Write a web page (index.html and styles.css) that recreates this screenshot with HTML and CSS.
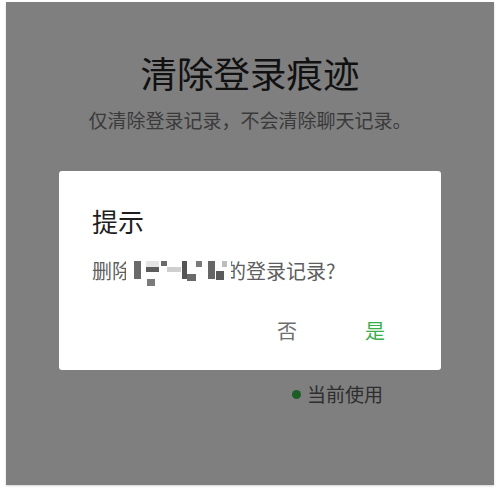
FILE: index.html
```html
<!DOCTYPE html>
<html lang="zh">
<head>
<meta charset="utf-8">
<link rel="stylesheet" href="styles.css">
</head>
<body>
<div class="frame">
  <div class="panel">
    <h1 class="title">清除登录痕迹</h1>
    <p class="subtitle">仅清除登录记录，不会清除聊天记录。</p>
    <div class="dialog">
      <div class="dialog-title">提示</div>
      <div class="dialog-msg">删除<span class="name"></span>的登录记录?<svg class="mosaic" width="105" height="30" viewBox="0 0 105 30">
          <rect x="0" y="0" width="105" height="30" fill="#ffffff"/>
          <rect x="20" y="3" width="13" height="6" fill="#e4e4e4"/>
          <rect x="8" y="3" width="7" height="18" fill="#6a6a6a"/>
          <rect x="20" y="9" width="13" height="5" fill="#5c5c5c"/>
          <rect x="21" y="21" width="8" height="7" fill="#7a7a7a"/>
          <rect x="35" y="3" width="6" height="5" fill="#6a6a6a"/>
          <rect x="41" y="9" width="14" height="5" fill="#cfcfcf"/>
          <rect x="56" y="3" width="5" height="18" fill="#555555"/>
          <rect x="61" y="16" width="9" height="7" fill="#6a6a6a"/>
          <rect x="70" y="3" width="6" height="6" fill="#7a7a7a"/>
          <rect x="82" y="3" width="7" height="18" fill="#666666"/>
          <rect x="90" y="13" width="8" height="9" fill="#5a5a5a"/>
          <rect x="96" y="3" width="5" height="6" fill="#bdbdbd"/>
        </svg></div>
      <div class="dialog-actions">
        <span class="btn btn-no">否</span>
        <span class="btn btn-yes">是</span>
      </div>
    </div>
    <div class="status">
      <span class="dot"></span>
      <span class="status-text">当前使用</span>
    </div>
  </div>
</div>
</body>
</html>
```

FILE: styles.css
```css
html, body {
  margin: 0;
  padding: 0;
  background: #ffffff;
}
body {
  font-family: "Noto Sans CJK SC", "Noto Sans", sans-serif;
  width: 499px;
  height: 489px;
  overflow: hidden;
}
.frame {
  padding: 2px 5px 4px 6px;
}
.panel {
  height: 483px;
  background: #7f7f7f;
  box-shadow: 0 1px 2px rgba(0,0,0,0.18);
  display: flex;
  flex-direction: column;
  align-items: center;
  box-sizing: border-box;
  padding-top: 49px;
}
.title {
  margin: 0;
  font-size: 36.5px;
  line-height: 44px;
  font-weight: 400;
  color: #111111;
}
.subtitle {
  margin: 12px 0 0;
  font-size: 19px;
  line-height: 26px;
  color: #3a3a3a;
}
.dialog {
  margin-top: 38px;
  width: 382px;
  box-sizing: border-box;
  background: #ffffff;
  border-radius: 3px;
  padding: 32px 56px 26px 33px;
  display: flex;
  flex-direction: column;
}
.dialog-title {
  font-size: 26px;
  line-height: 36px;
  color: #1e1e1e;
}
.dialog-msg {
  position: relative;
  margin-top: 19px;
  font-size: 20px;
  line-height: 26px;
  color: #5e5e5e;
  white-space: nowrap;
}
.name {
  display: inline-block;
  width: 94px;
}
.mosaic {
  position: absolute;
  left: 34px;
  top: 0;
}
.dialog-actions {
  margin-top: 34px;
  display: flex;
  justify-content: flex-end;
  gap: 68px;
  font-size: 20px;
  line-height: 26px;
}
.btn-no {
  color: #6e6e6e;
}
.btn-yes {
  color: #3aae4a;
}
.status {
  align-self: flex-start;
  margin: 11px 0 0 286px;
  display: flex;
  align-items: center;
  gap: 6px;
}
.dot {
  width: 9px;
  height: 9px;
  border-radius: 50%;
  background: #1d5e27;
}
.status-text {
  font-size: 19px;
  line-height: 26px;
  color: #2e2e2e;
}
```
